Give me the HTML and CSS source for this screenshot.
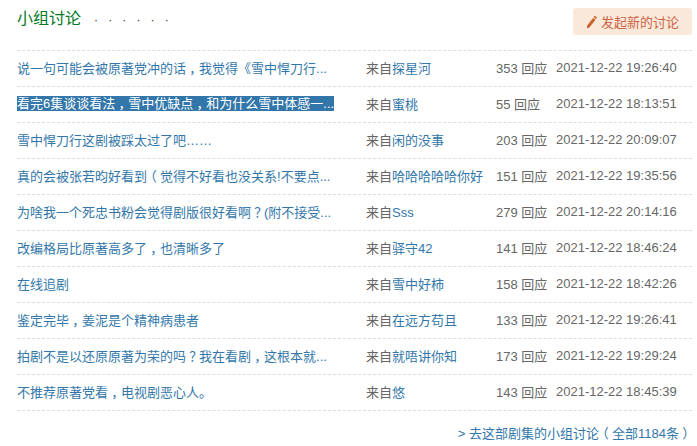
FILE: index.html
```html
<!DOCTYPE html>
<html lang="zh-CN">

<head>
  <meta charset="UTF-8">
  <title>小组讨论</title>
  <link rel="stylesheet" href="styles.css">
</head>

<body>
  <div class="section">
    <div class="section-head">
      <h2>小组讨论<span class="dots">· · · · · ·</span></h2>
      <a class="new-topic" href="#">
        <svg class="pencil" width="12" height="14" viewBox="0 0 12 14">
          <path d="M8.6 0.8 L11 2.6 L10 4 L7.6 2.2 Z M7.1 2.9 L9.5 4.7 L3.6 12.2 L0.9 13.5 L1.2 10.4 Z" fill="#c8622c"/>
        </svg>发起新的讨论</a>
    </div>

    <div class="topic-list">
      <div class="topic">
        <a class="topic-title" href="#">说一句可能会被原著党冲的话<span class="punct">，</span>我觉得《雪中悍刀行...</a>
        <span class="topic-author">来自<a href="#">探星河</a></span>
        <span class="topic-replies">353 回应</span>
        <span class="topic-time">2021-12-22 19:26:40</span>
      </div>
      <div class="topic">
        <a class="topic-title" href="#"><span class="selected">看完6集谈谈看法<span class="punct">，</span>雪中优缺点<span class="punct">，</span>和为什么雪中体感一...</span></a>
        <span class="topic-author">来自<a href="#">蜜桃</a></span>
        <span class="topic-replies">55 回应</span>
        <span class="topic-time">2021-12-22 18:13:51</span>
      </div>
      <div class="topic">
        <a class="topic-title" href="#">雪中悍刀行这剧被踩太过了吧……</a>
        <span class="topic-author">来自<a href="#">闲的没事</a></span>
        <span class="topic-replies">203 回应</span>
        <span class="topic-time">2021-12-22 20:09:07</span>
      </div>
      <div class="topic">
        <a class="topic-title" href="#">真的会被张若昀好看到<span class="punct">（</span>觉得不好看也没关系!不要点...</a>
        <span class="topic-author">来自<a href="#">哈哈哈哈哈你好</a></span>
        <span class="topic-replies">151 回应</span>
        <span class="topic-time">2021-12-22 19:35:56</span>
      </div>
      <div class="topic">
        <a class="topic-title" href="#">为啥我一个死忠书粉会觉得剧版很好看啊<span class="punct">？</span>(附不接受...</a>
        <span class="topic-author">来自<a href="#">Sss</a></span>
        <span class="topic-replies">279 回应</span>
        <span class="topic-time">2021-12-22 20:14:16</span>
      </div>
      <div class="topic">
        <a class="topic-title" href="#">改编格局比原著高多了<span class="punct">，</span>也清晰多了</a>
        <span class="topic-author">来自<a href="#">驿守42</a></span>
        <span class="topic-replies">141 回应</span>
        <span class="topic-time">2021-12-22 18:46:24</span>
      </div>
      <div class="topic">
        <a class="topic-title" href="#">在线追剧</a>
        <span class="topic-author">来自<a href="#">雪中好柿</a></span>
        <span class="topic-replies">158 回应</span>
        <span class="topic-time">2021-12-22 18:42:26</span>
      </div>
      <div class="topic">
        <a class="topic-title" href="#">鉴定完毕<span class="punct">，</span>姜泥是个精神病患者</a>
        <span class="topic-author">来自<a href="#">在远方苟且</a></span>
        <span class="topic-replies">133 回应</span>
        <span class="topic-time">2021-12-22 19:26:41</span>
      </div>
      <div class="topic">
        <a class="topic-title" href="#">拍剧不是以还原原著为荣的吗<span class="punct">？</span>我在看剧<span class="punct">，</span>这根本就...</a>
        <span class="topic-author">来自<a href="#">就唔讲你知</a></span>
        <span class="topic-replies">173 回应</span>
        <span class="topic-time">2021-12-22 19:29:24</span>
      </div>
      <div class="topic">
        <a class="topic-title" href="#">不推荐原著党看<span class="punct">，</span>电视剧恶心人。</a>
        <span class="topic-author">来自<a href="#">悠</a></span>
        <span class="topic-replies">143 回应</span>
        <span class="topic-time">2021-12-22 18:45:39</span>
      </div>
    </div>

    <div class="more">
      <a href="#">&gt; 去这部剧集的小组讨论<span class="punct">（</span>全部1184条<span class="punct">）</span></a>
    </div>
  </div>
</body>

</html>
```

FILE: styles.css
```css
body {
  font-family: "Liberation Sans", "Noto Sans CJK SC", sans-serif;
  font-size: 13px;
  color: #666;
  margin: 0;
}

a {
  color: #37a;
  text-decoration: none;
}

.section {
  padding: 0 5px 0 17px;
}

.section-head {
  display: flex;
  justify-content: space-between;
  align-items: flex-start;
  height: 50px;
}

.section-head h2 {
  margin: 7px 0 0;
  font-size: 16px;
  line-height: 24px;
  font-weight: normal;
  color: #072;
}

.dots {
  margin-left: 13px;
  font-size: 12px;
  letter-spacing: 3.4px;
  color: #333;
}

.new-topic {
  display: flex;
  align-items: center;
  gap: 3px;
  margin-top: 8px;
  padding: 0 13px;
  height: 27px;
  border-radius: 3px;
  background-color: #fae9da;
  color: #ca6445;
}

.topic-list {
  border-top: 1px dashed #ddd;
}

.topic {
  display: grid;
  grid-template-columns: 349px 130px 60px 1fr;
  align-items: center;
  height: 33px;
  padding-bottom: 2px;
  border-bottom: 1px dashed #ddd;
}

.selected {
  display: inline-block;
  line-height: 15px;
  background-color: #3377aa;
  color: #fff;
}

/* half-width punctuation with equal padding, so it sits centred in a full cell */
.punct {
  font-feature-settings: "halt";
  padding: 0 3.25px;
}

.more {
  margin-top: 12px;
  text-align: right;
}
```
